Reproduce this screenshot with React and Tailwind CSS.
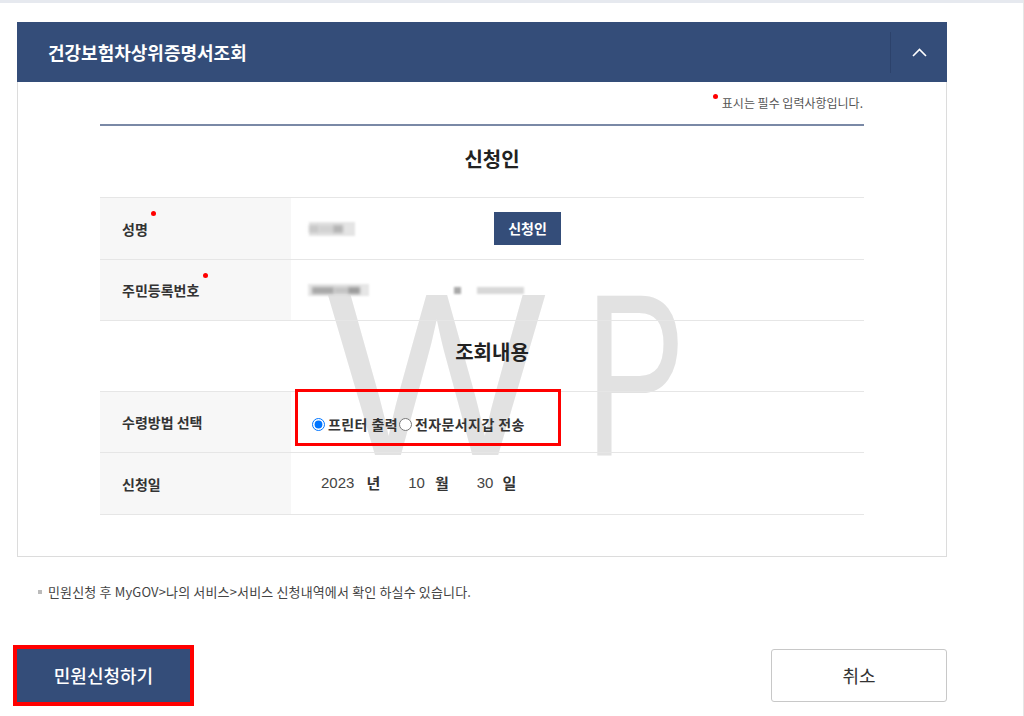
import { useState } from 'react';

function RequiredDot({ className }) {
  return <span className={`absolute left-full w-[5px] h-[5px] rounded-full bg-[#ff0000] ${className}`} />;
}

function Label({ children, required, dotClass = 'ml-[3px] top-[-8px]' }) {
  return (
    <div className="w-[191px] h-full shrink-0 bg-[#f7f7f7] flex items-center pl-[22px]">
      <span className="relative text-[14px] leading-[20px] font-bold text-[#333]">
        {children}
        {required && <RequiredDot className={dotClass} />}
      </span>
    </div>
  );
}

function Blur({ className }) {
  return <span className={`block blur-[1.2px] ${className}`} />;
}

function Row({ label, required, dotClass, height, children }) {
  return (
    <div className={`flex border-b border-[#e6e6e6] ${height}`}>
      <Label required={required} dotClass={dotClass}>{label}</Label>
      <div className="relative flex-1 flex items-center">{children}</div>
    </div>
  );
}

function SectionTitle({ title, height }) {
  return (
    <div className={`flex items-center justify-center pl-[20px] ${height}`}>
      <h3 className="text-[20px] leading-[28px] font-bold text-[#222]">{title}</h3>
    </div>
  );
}

export default function App() {
  const [method, setMethod] = useState('print');

  return (
    <div className="relative w-[1024px] h-[716px] bg-white overflow-hidden border-r border-[#e6e6e6] font-['Noto_Sans_CJK_KR','Noto_Sans',sans-serif]">
      <div className="h-[3px] bg-[#e6e9ef]" />

      <div className="pl-[17px] w-[947px]">
        {/* Panel */}
        <div className="mt-[19px]">
          <div className="h-[60px] bg-[#344d79] flex items-center justify-between pl-[31px]">
            <h2 className="text-[18px] font-bold text-white">건강보험차상위증명서조회</h2>
            <div className="w-[57px] h-[41px] border-l border-[#2c426b] flex items-center justify-center">
              <svg width="15" height="9" viewBox="0 0 15 9" fill="none">
                <polyline points="1,8 7.5,1.5 14,8" stroke="#fff" strokeWidth="1.6" />
              </svg>
            </div>
          </div>

          <div className="relative border-x border-b border-[#dcdcdc] bg-white px-[82px] pt-[12px] pb-[41px]">
            {/* watermark */}
            <div className="absolute left-[309px] top-[177px] flex font-['Liberation_Sans',Arial,sans-serif] text-[232px] leading-none text-[#e2e2e2] select-none pointer-events-none">
              <span>W</span>
              <span className="ml-[39px] scale-x-65 origin-left">P</span>
            </div>

            <div className="relative">
              <div className="flex justify-end items-start h-[18px] pr-[1px]">
                <span className="w-[5px] h-[5px] rounded-full bg-[#ff0000] mr-[4px]" />
                <span className="text-[12px] leading-[18px] text-[#555]">표시는 필수 입력사항입니다.</span>
              </div>
              <div className="mt-[12px] h-[2px] bg-[#7a89a6]" />

              <SectionTitle title="신청인" height="h-[71px] pb-[6px]" />
              <div className="border-t border-[#e6e6e6]">
                <Row label="성명" required height="h-[62px]">
                  <div className="flex items-center pl-[18px]">
                    <div className="flex items-center w-[46px] h-[14px] bg-[#e4e4e4] blur-[1px]">
                      <Blur className="w-[10px] h-[8px] bg-[#c9c9c9]" />
                      <Blur className="w-[14px] h-[8px] bg-[#d2d2d2]" />
                      <Blur className="w-[10px] h-[8px] bg-[#b5b5b5]" />
                    </div>
                    <button className="ml-[139px] w-[67px] h-[33px] bg-[#344d79] text-white text-[14px] font-bold">
                      신청인
                    </button>
                  </div>
                </Row>
                <Row label="주민등록번호" required dotClass="ml-[4px] top-[-7px]" height="h-[61px]">
                  <div className="flex items-center pl-[17px]">
                    <div className="flex items-center w-[61px] h-[12px] bg-[#e6e6e6] blur-[1px]">
                      <Blur className="ml-[4px] w-[22px] h-[7px] bg-[#a8a8a8]" />
                      <Blur className="w-[14px] h-[7px] bg-[#c4c4c4]" />
                      <Blur className="w-[12px] h-[7px] bg-[#9c9c9c]" />
                    </div>
                    <Blur className="ml-[85px] w-[7px] h-[7px] bg-[#a9a9a9]" />
                    <Blur className="ml-[16px] w-[47px] h-[7px] bg-[#d8d8d8]" />
                  </div>
                </Row>
              </div>

              <SectionTitle title="조회내용" height="h-[70px] pb-[8px]" />
              <div className="border-t border-[#e6e6e6]">
                <Row label="수령방법 선택" height="h-[61px]">
                  <div className="flex items-center pl-[21px] pt-[4px] text-[14px] font-bold text-[#333] tracking-[0.4px]">
                    <input
                      type="radio"
                      name="method"
                      checked={method === 'print'}
                      onChange={() => setMethod('print')}
                      className="m-0 w-[13px] h-[13px]"
                    />
                    <span className="ml-[3px]">프린터 출력</span>
                    <input
                      type="radio"
                      name="method"
                      checked={method === 'wallet'}
                      onChange={() => setMethod('wallet')}
                      className="m-0 ml-[1px] w-[13px] h-[13px]"
                    />
                    <span className="ml-[3px]">전자문서지갑 전송</span>
                  </div>
                  {/* highlight box */}
                  <div className="absolute left-[4px] top-[-3px] w-[266px] h-[57px] border-[3px] border-[#ff0000] pointer-events-none" />
                </Row>
                <Row label="신청일" height="h-[62px]">
                  <div className="flex items-center pl-[30px] text-[15px] text-[#444]">
                    <span className="font-['Liberation_Sans',Arial,sans-serif]">2023</span>
                    <span className="ml-[12px] font-bold text-[#333]">년</span>
                    <span className="ml-[28px] font-['Liberation_Sans',Arial,sans-serif]">10</span>
                    <span className="ml-[10px] font-bold text-[#333]">월</span>
                    <span className="ml-[28px] font-['Liberation_Sans',Arial,sans-serif]">30</span>
                    <span className="ml-[9px] font-bold text-[#333]">일</span>
                  </div>
                </Row>
              </div>
            </div>
          </div>
        </div>

        {/* Note */}
        <div className="mt-[26px] flex items-center pl-[21px] h-[18px]">
          <span className="w-[4px] h-[4px] bg-[#bbb]" />
          <p className="ml-[6px] text-[13px] leading-[18px] text-[#444] tracking-[0.15px]">
            민원신청 후 MyGOV&gt;나의 서비스&gt;서비스 신청내역에서 확인 하실수 있습니다.
          </p>
        </div>

        {/* Buttons */}
        <div className="mt-[48px] flex justify-between">
          <button className="w-[173px] h-[53px] bg-[#344d79] text-white text-[18px] font-medium outline-4 outline-[#ff0000]">
            민원신청하기
          </button>
          <button className="w-[176px] h-[53px] bg-white border border-[#c8c8c8] rounded-[3px] text-[18px] text-[#333]">
            취소
          </button>
        </div>
      </div>
    </div>
  );
}
